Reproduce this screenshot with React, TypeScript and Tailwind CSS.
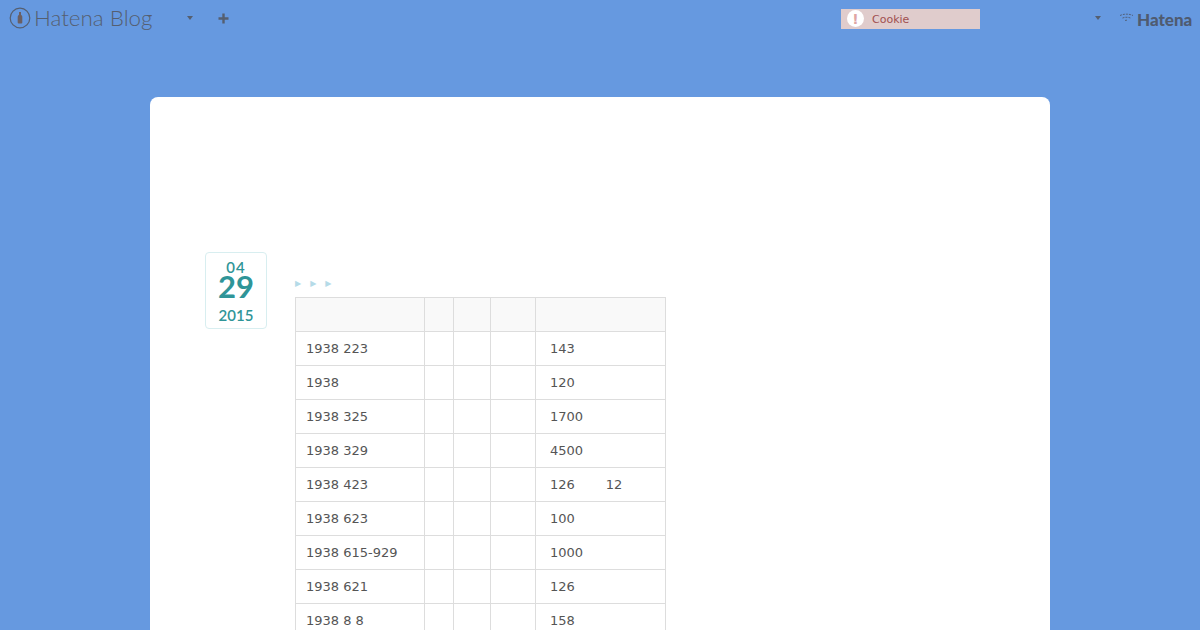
const rows: [string, string, string?][] = [
  ["1938 223", "143"],
  ["1938", "120"],
  ["1938 325", "1700"],
  ["1938 329", "4500"],
  ["1938 423", "126", "12"],
  ["1938 623", "100"],
  ["1938 615-929", "1000"],
  ["1938 621", "126"],
  ["1938 8 8", "158"],
];

const cell = "border border-[#ddd] h-[34px] p-0 align-middle";

function BlogMark() {
  return (
    <svg width="22" height="22" viewBox="0 0 22 22" fill="none">
      <circle cx="11" cy="11" r="9.8" stroke="#555f70" strokeWidth="1.200" />
      <path
        d="M10 5h2v2.800c.8.500 1.300 1.200 1.300 2.200V15.500c0 .6-.3.900-.9.900H9.600c-.6 0-.9-.3-.9-.9V10c0-1 .5-1.700 1.300-2.200z"
        fill="#6b5f62"
      />
    </svg>
  );
}

function HatenaMark() {
  return (
    <svg width="15" height="12" viewBox="0 0 15 12" fill="none" stroke="#4f5b70" strokeWidth="0.9" strokeDasharray="2 1">
      <path d="M1 3.500c4-1.800 9-1.800 13 0" />
      <path d="M3.500 6c2.500-1 5.500-1 8 0" />
      <path d="M6 8.500c1-.4 2-.4 3 0" />
    </svg>
  );
}

function Caret({ className }: { className: string }) {
  return <div className={`w-0 h-0 border-x-[3px] border-x-transparent border-t-[4px] border-t-[#555f70] ${className}`} />;
}

export default function App() {
  return (
    <div className="h-[630px] overflow-hidden bg-[#6699e0] font-['DejaVu_Sans',sans-serif]">
      {/* Top bar */}
      <header className="flex items-center h-9 pl-[9px] pr-[7px]">
        <BlogMark />
        <span className="ml-[3px] w-[119px] text-[22.400px] leading-none font-['Lato',sans-serif] font-light text-[#555f70] whitespace-nowrap">
          Hatena Blog
        </span>
        <Caret className="ml-[34px]" />
        <svg className="ml-[25px]" width="11" height="11" viewBox="0 0 11 11">
          <path d="M4.300 0.500h2.400v3.800h3.800v2.400H6.700v3.800H4.300V6.700H0.500V4.300h3.800z" fill="#555f70" />
        </svg>
        <div className="ml-[612px] mt-[1px] flex items-center w-[139px] h-5 bg-[#e0cccc] pl-[6px]">
          <div className="flex items-center justify-center w-[17px] h-[17px] rounded-full bg-white text-[#e0a5a5] text-[14px] font-bold leading-none">!</div>
          <span className="ml-[8px] mt-[3px] text-[11px] text-[#a05050]">Cookie</span>
        </div>
        <Caret className="ml-[115px]" />
        <div className="ml-[18px] flex items-center">
          <HatenaMark />
          <span className="ml-[3px] mt-[2px] text-[17px] leading-none font-['Lato',sans-serif] font-black text-[#4f5b70]">Hatena</span>
        </div>
      </header>

      {/* Blog card */}
      <main className="mx-auto mt-[61px] w-[900px] h-[600px] bg-white rounded-t-lg flex pt-[155px] pl-[55px]">
        <div className="flex flex-col items-center w-[62px] h-[77px] border border-[#d8eef0] rounded text-[#2f9598] font-['Lato',sans-serif] font-semibold">
          <span className="mt-[7px] text-[15px] leading-[15px] tracking-[1px]">04</span>
          <span className="text-[31px] leading-[26px] font-bold -mt-[2px]">29</span>
          <span className="mt-[9px] text-[15px] leading-[15px]">2015</span>
        </div>
        <div className="ml-7 mt-[26px] w-[370px]">
          <div className="flex gap-[9px] h-[19px] pt-[1px] text-[8px] leading-[10px] text-[#b5dbe8]">
            <span>▶</span>
            <span>▶</span>
            <span>▶</span>
          </div>
          <table className="w-[371px] table-fixed border-collapse text-[13px] text-[#555]">
            <colgroup>
              <col className="w-[129px]" />
              <col className="w-[29px]" />
              <col className="w-[37px]" />
              <col className="w-[45px]" />
              <col className="w-[130px]" />
            </colgroup>
            <thead>
              <tr className="bg-[#f9f9f9]">
                <th className={cell} />
                <th className={cell} />
                <th className={cell} />
                <th className={cell} />
                <th className={cell} />
              </tr>
            </thead>
            <tbody>
              {rows.map((r) => (
                <tr key={r[0]}>
                  <td className={`${cell} pl-[10px]`}>{r[0]}</td>
                  <td className={cell} />
                  <td className={cell} />
                  <td className={cell} />
                  <td className={`${cell} pl-[14px]`}>
                    {r[1]}
                    {r[2] && <span className="ml-[31px]">{r[2]}</span>}
                  </td>
                </tr>
              ))}
            </tbody>
          </table>
        </div>
      </main>
    </div>
  );
}
